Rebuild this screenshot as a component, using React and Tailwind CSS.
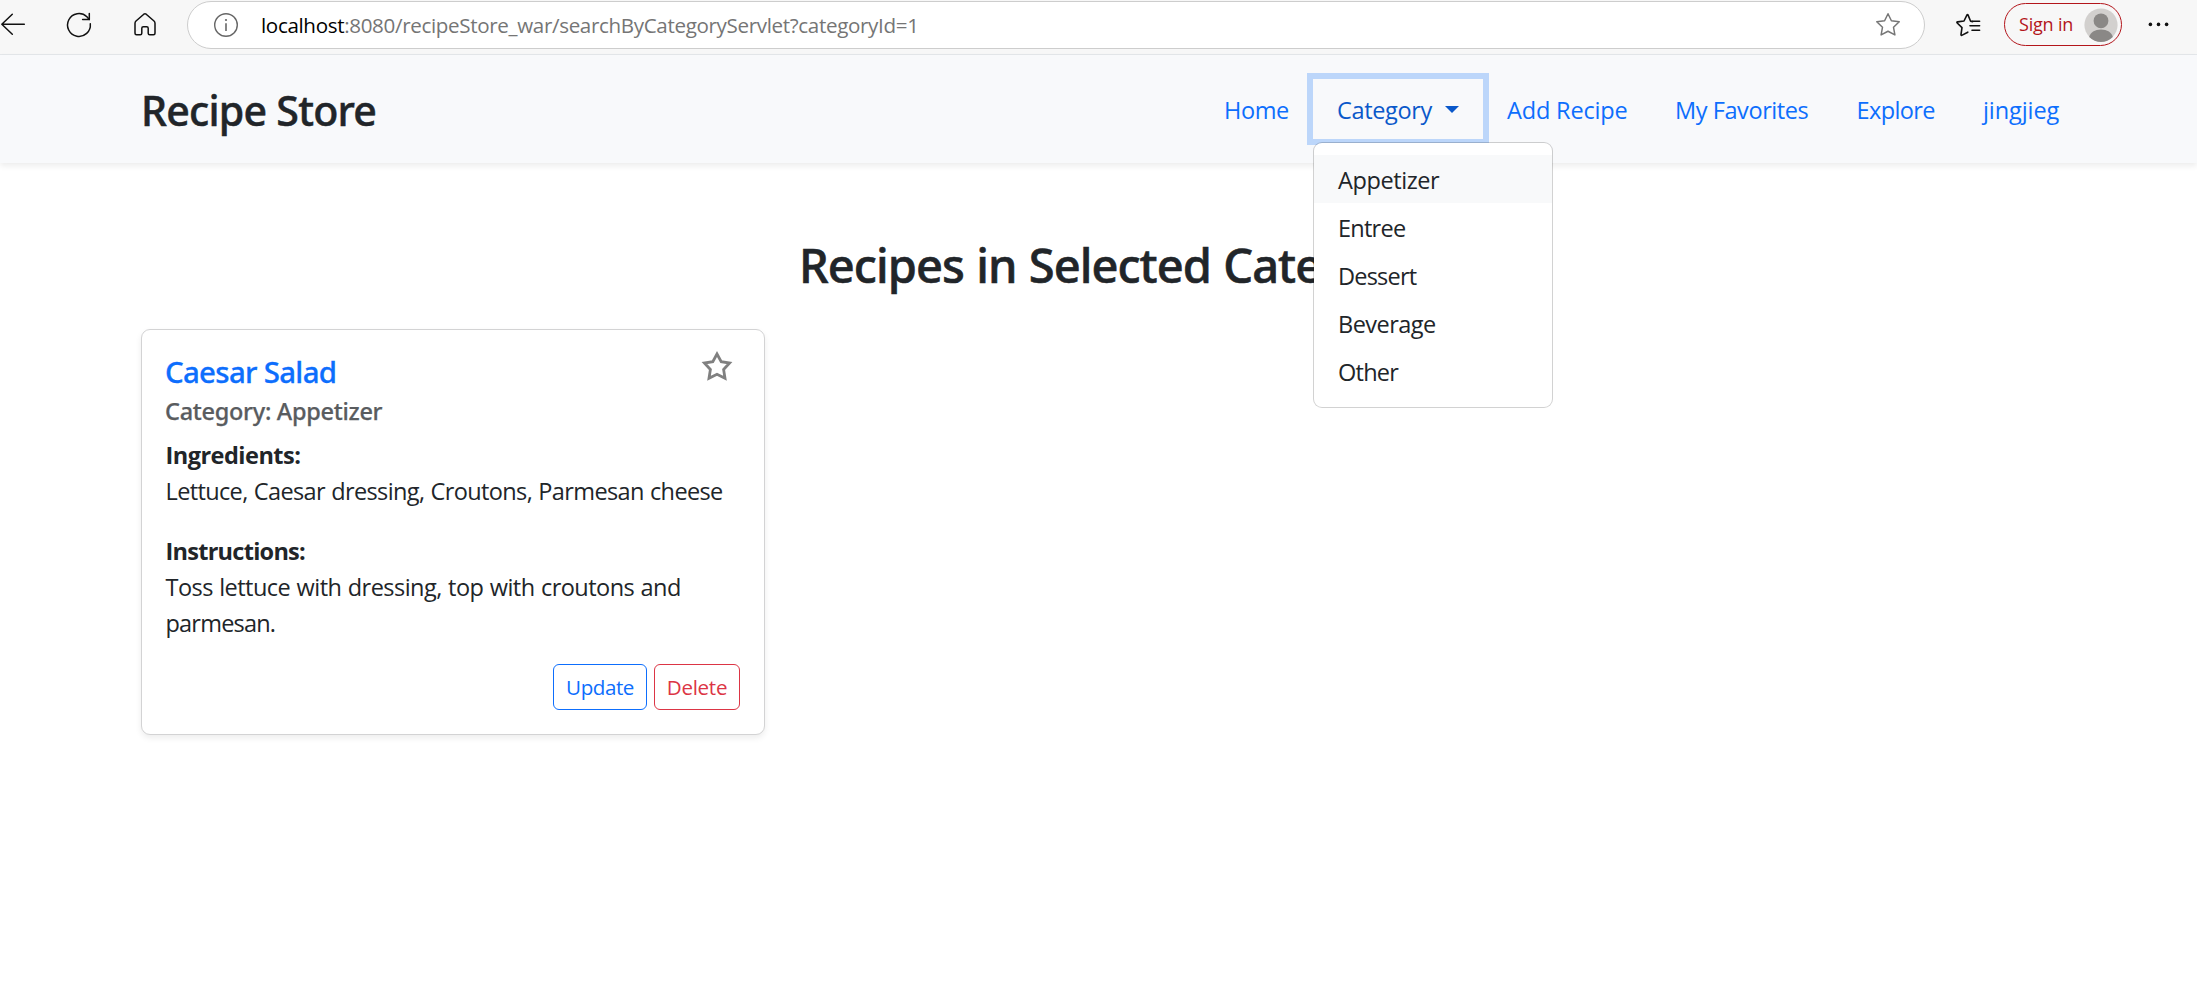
import React from "react";

const STAR = "M0 -10.6 L3.2 -4 L10.6 -3 L5.2 2.2 L6.5 9.4 L0 5.9 L-6.5 9.4 L-5.2 2.2 L-10.6 -3 L-3.2 -4 Z";

function BrowserBar() {
  return (
    <div className="flex h-[55px] items-start border-b border-[#e4e7ea] bg-[#f7f7f7]">
      <svg className="h-[54px] w-[40px] shrink-0" viewBox="0 0 40 54" fill="none" stroke="#111" strokeWidth="1.5" strokeLinecap="round" strokeLinejoin="round">
        <path d="M24.3 24.3H1.8M12.3 14.3L1.8 24.3L12.3 34.2" />
      </svg>
      <svg className="ml-[20px] h-[54px] w-[40px] shrink-0" viewBox="60 0 40 54" fill="none" stroke="#111" strokeWidth="1.5" strokeLinecap="round" strokeLinejoin="round">
        <path d="M90.3 23.8A11.4 11.4 0 1 1 86.9 16.8L89.3 19.4" />
        <path d="M89.3 13.6V19.6H82.6" />
      </svg>
      <svg className="ml-[25px] h-[54px] w-[40px] shrink-0" viewBox="125 0 40 54" fill="none" stroke="#111" strokeWidth="1.5" strokeLinecap="round" strokeLinejoin="round">
        <path d="M143.8 14.2Q145 13.2 146.2 14.2L154 21Q155 21.9 155 23.2V33.2Q155 34.7 153.5 34.7H149.7Q148.2 34.7 148.2 33.2V28.2Q148.2 26.7 146.7 26.7H143.3Q141.8 26.7 141.8 28.2V33.2Q141.8 34.7 140.3 34.7H136.5Q135 34.7 135 33.2V23.2Q135 21.9 136 21Z" />
      </svg>
      <div className="mt-px ml-[22px] flex h-[48px] w-[1738px] shrink-0 items-center rounded-full border border-[#cdcdcd] bg-white">
        <svg className="ml-[24px] size-[28px]" viewBox="212 11 28 28" fill="none" stroke="#666" strokeWidth="1.4">
          <circle cx="226" cy="25" r="11.3" />
          <path d="M226 23.2V31" strokeWidth="1.6" />
          <circle cx="226" cy="20" r="1.1" fill="#666" stroke="none" />
        </svg>
        <div className="ml-[21px] grow whitespace-nowrap text-[20.58px] tracking-[-0.34px] text-[#757575]">
          <span className="text-black">localhost</span>:8080/recipeStore_war/searchByCategoryServlet?categoryId=1
        </div>
        <svg className="mr-[22px] size-[28px]" viewBox="-14 -14 28 28" fill="none" stroke="#767676" strokeWidth="1.4" strokeLinejoin="round">
          <path d={STAR} transform="scale(1.06)" />
        </svg>
      </div>
      <svg className="ml-[27px] h-[54px] w-[32px] shrink-0" viewBox="1952 0 32 54" fill="none" stroke="#111" strokeWidth="1.6" strokeLinecap="round" strokeLinejoin="round">
        <path d="M1972.6 21.6L1970.6 21.3L1968 14.9Q1967.5 14 1967 14.9L1964 21L1957.6 21.9Q1956.4 22.2 1957.2 23L1962 27.6L1961 34.4Q1961 35.8 1962.2 35.1L1967.8 32.2" />
        <path d="M1971.8 21.3H1979.6M1970 25.8H1979.6M1972 30.3H1979.6" />
      </svg>
      <div className="mt-[3px] ml-[20px] flex h-[43px] w-[118px] shrink-0 items-center rounded-full border-[1.5px] border-[#b3151b]">
        <span className="ml-[14px] w-[65px] whitespace-nowrap text-[18px] tracking-[-0.2px] text-[#b3151b]">Sign in</span>
        <svg className="size-[34px] shrink-0" viewBox="0 0 34 34">
          <circle cx="17" cy="17" r="16.6" fill="#d2d0ce" />
          <circle cx="17" cy="12.8" r="7.4" fill="#8a8886" />
          <path d="M5.2 29C6 24.5 11 21.4 17 21.4S28 24.5 28.8 29A16.6 16.6 0 0 1 5.2 29Z" fill="#8a8886" />
        </svg>
      </div>
      <svg className="ml-[20px] h-[54px] w-[32px] shrink-0" viewBox="2142 0 32 54" fill="#111">
        <circle cx="2150.4" cy="24.4" r="1.8" />
        <circle cx="2158.5" cy="24.4" r="1.8" />
        <circle cx="2166.6" cy="24.4" r="1.8" />
      </svg>
    </div>
  );
}

const MENU = [
  { label: "Appetizer", cls: "bg-[#f8f9fa] tracking-[-0.42px]" },
  { label: "Entree", cls: "tracking-[-0.75px]" },
  { label: "Dessert", cls: "tracking-[-0.8px]" },
  { label: "Beverage", cls: "tracking-[-0.55px]" },
  { label: "Other", cls: "tracking-[-0.75px]" },
];

function NavBar() {
  const link = "flex h-[60px] items-center pt-[2px] pl-[24px] whitespace-nowrap";
  return (
    <nav className="flex h-[108px] items-center bg-[#f8f9fb] pl-[141px] shadow-[0_3px_6px_rgba(0,0,0,0.075)]">
      <h1 className="w-[1059px] pt-[2px] font-['Noto_Sans',sans-serif] text-[41.16px] leading-[50px] font-medium tracking-[-0.78px] text-[#212529] [-webkit-text-stroke:0.5px_#212529]">Recipe Store</h1>
      <div className="flex text-[23.52px] leading-[36px] text-[#0d6efd]">
        <a className={`${link} w-[113px] tracking-[-0.42px]`}>Home</a>
        <div className="relative w-[170px]">
          <a className={`${link} w-[170px] tracking-[-0.36px] text-[#0a58ca] shadow-[0_0_0_6px_#bcd6fa]`}>
            Category
            <svg className="mb-[2px] ml-[13px] h-[7px] w-[14px]" viewBox="0 0 14 7" fill="#0a58ca">
              <path d="M0 0H14L7 7Z" />
            </svg>
          </a>
          <div className="absolute top-[63px] left-0 z-10 h-[266px] w-[240px] rounded-[9px] border border-black/[.175] bg-white bg-clip-padding py-[12px] text-[#212529]">
            {MENU.map((m) => (
              <div key={m.label} className={`flex h-[48px] items-center pt-[2px] pl-[24px] ${m.cls}`}>{m.label}</div>
            ))}
          </div>
        </div>
        <a className={`${link} w-[168px] tracking-[-0.17px]`}>Add Recipe</a>
        <a className={`${link} w-[181.5px] tracking-[-0.43px]`}>My Favorites</a>
        <a className={`${link} w-[126.5px] tracking-[-0.62px]`}>Explore</a>
        <a className={`${link} tracking-[-0.09px]`}>jingjieg</a>
      </div>
    </nav>
  );
}

function RecipeCard() {
  return (
    <article className="ml-[141px] flex h-[406px] w-[624px] flex-col rounded-[9px] border border-[#d3d3d4] bg-white px-[24px] pt-[24px] text-[23.52px] leading-[36px] text-[#212529] shadow-[0_3px_6px_rgba(0,0,0,0.075)]">
      <div className="flex h-[42px] items-start justify-between">
        <h3 className="-ml-px font-['Noto_Sans',sans-serif] text-[29.4px] font-medium tracking-[-0.68px] text-[#0d6efd] [-webkit-text-stroke:0.3px_#0d6efd]">Caesar Salad</h3>
        <svg className="-mt-[4px] mr-[6px] size-[34px]" viewBox="-17 -17 34 34" fill="none" stroke="#808080" strokeWidth="2.8" strokeLinejoin="miter">
          <path d="M0 -13 L4.2 -5.3 L12.6 -4 L6.6 2.5 L8 11.2 L0 7.2 L-8 11.2 L-6.6 2.5 L-12.6 -4 L-4.2 -5.3 Z" />
        </svg>
      </div>
      <h4 className="-ml-px h-[40px] pt-px font-['Noto_Sans',sans-serif] leading-[29px] font-medium tracking-[-0.29px] text-[#595c5f] [-webkit-text-stroke:0.25px_#595c5f]">Category: Appetizer</h4>
      <div className="-ml-[0.5px] h-[96px] pt-px whitespace-nowrap">
        <div className="font-bold tracking-[-0.52px]">Ingredients:</div>
        <div className="tracking-[-0.64px] [word-spacing:0.8px]">Lettuce, Caesar dressing, Croutons, Parmesan cheese</div>
      </div>
      <div className="-ml-[0.5px] h-[132px] pt-px whitespace-nowrap">
        <div className="font-bold tracking-[-0.74px]">Instructions:</div>
        <div className="tracking-[-0.54px] [word-spacing:0.8px]">Toss lettuce with dressing, top with croutons and</div>
        <div className="tracking-[-0.8px]">parmesan.</div>
      </div>
      <div className="flex justify-end gap-[7px] text-[20.58px]">
        <button className="h-[46px] w-[94px] rounded-[6px] border border-[#0d6efd] leading-[42px] tracking-[-0.45px] text-[#0d6efd]">Update</button>
        <button className="h-[46px] w-[86px] rounded-[6px] border border-[#dc3545] leading-[42px] tracking-[-0.31px] text-[#dc3545]">Delete</button>
      </div>
    </article>
  );
}

export default function App() {
  return (
    <div className="h-[988px] overflow-hidden bg-white font-['Open_Sans',sans-serif]">
      <BrowserBar />
      <NavBar />
      <main>
        <h2 className="h-[166px] pt-[73px] pl-[799px] font-['Noto_Sans',sans-serif] text-[47.04px] leading-[58px] font-medium tracking-[-0.95px] whitespace-nowrap text-[#212529] [-webkit-text-stroke:0.6px_#212529] [word-spacing:1px]">Recipes in Selected Category</h2>
        <RecipeCard />
      </main>
    </div>
  );
}
